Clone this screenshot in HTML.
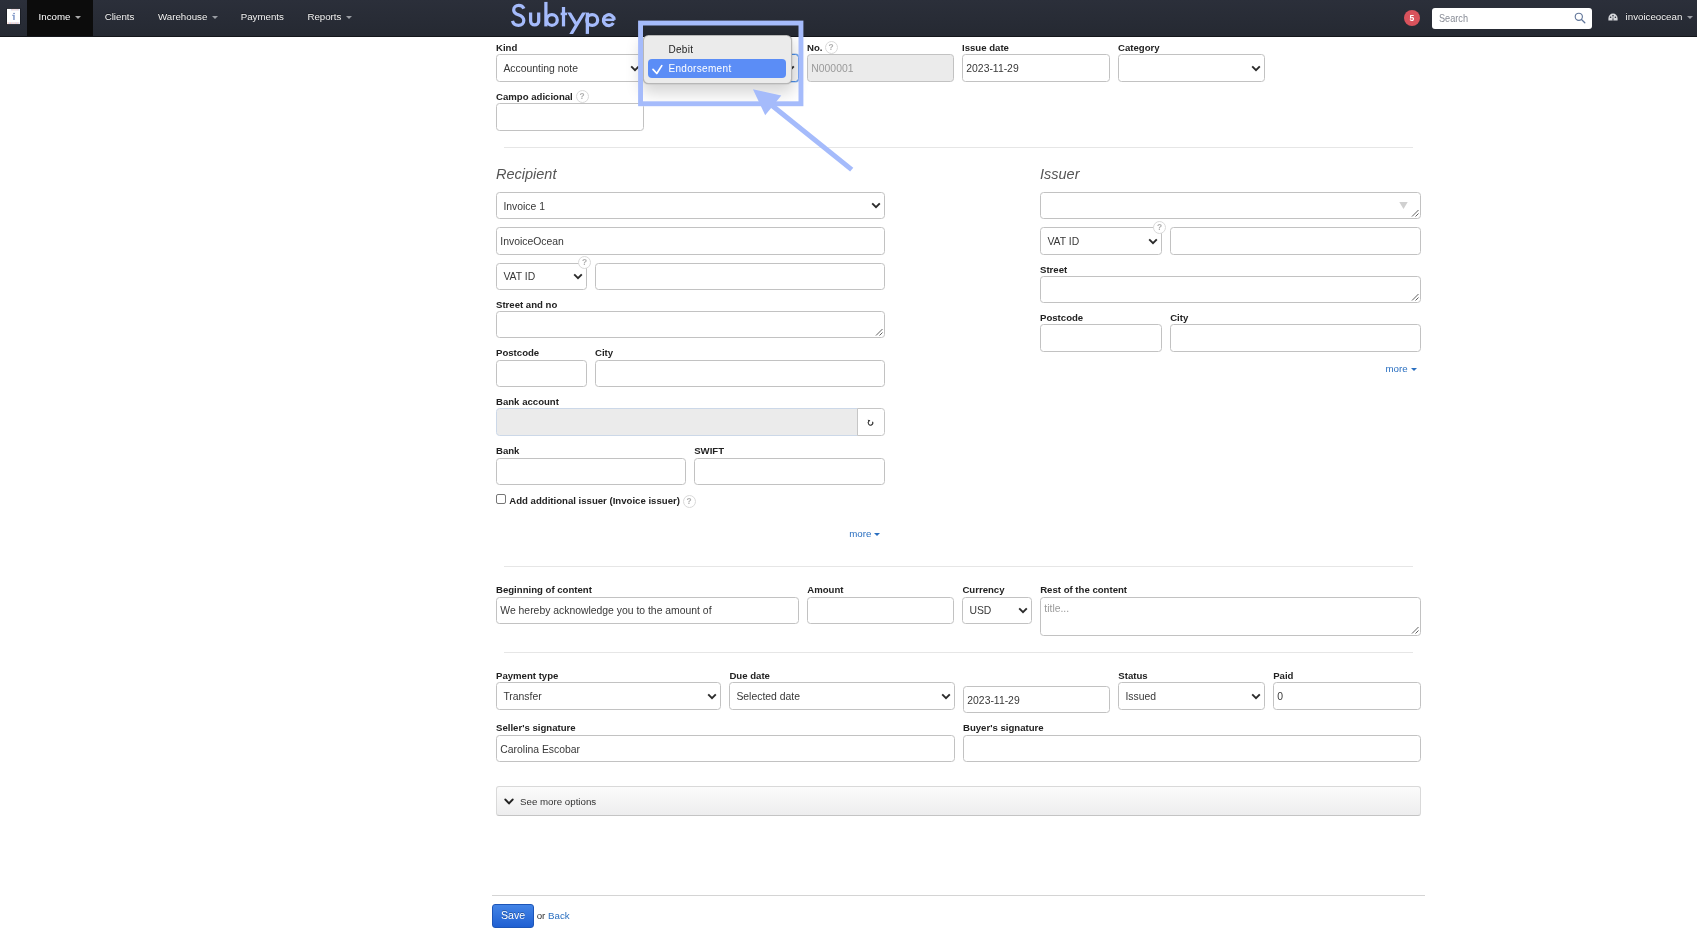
<!DOCTYPE html>
<html>
<head>
<meta charset="utf-8">
<title>New accounting note</title>
<style>
html,body{margin:0;padding:0}
body{width:1697px;height:944px;overflow:hidden;background:#fff;position:relative;font-family:"Liberation Sans",sans-serif;color:#222}
.a{position:absolute}
#form,#anno,#nav{will-change:transform}
#form,#anno{position:absolute;left:0;top:0;width:1697px;height:944px}
/* navbar */
#nav{position:absolute;left:0;top:0;width:1697px;height:36px;background:linear-gradient(#2b2f3a,#252932);border-bottom:1px solid #14161b;box-sizing:content-box}
#nav .it{position:absolute;top:0;height:36px;line-height:34px;font-size:9.72px;color:#f2f2f2;white-space:nowrap;text-shadow:0 -1px 0 rgba(0,0,0,.5)}
.car{display:inline-block;width:0;height:0;border-left:3px solid transparent;border-right:3px solid transparent;border-top:3px solid #9a9da3;vertical-align:middle;margin-left:5px;margin-top:0}
/* form */
.l{position:absolute;font-weight:bold;font-size:9.6px;color:#222;line-height:12px;white-space:nowrap}
.in{position:absolute;box-sizing:border-box;border:1px solid #c2c2c2;border-radius:3.5px;background:#fff;height:27px;font-size:10.4px;color:#333;line-height:25px;padding-left:3.5px;white-space:nowrap;overflow:hidden}
.t{position:absolute;line-height:13px;white-space:nowrap}
.dis{background:#ebebeb;color:#999}
.hr{position:absolute;height:1px;background:#e6e6e6}
.q{position:absolute;box-sizing:border-box;width:13px;height:13px;border:1px solid #d9d9d9;border-radius:50%;background:#fff;color:#b0b0b0;font-size:8.4px;font-weight:bold;line-height:11px;text-align:center}
.h{position:absolute;font-style:italic;font-size:14.5px;color:#555;line-height:18px;white-space:nowrap}
.lnk{position:absolute;font-size:9.72px;color:#2a6fc0;line-height:12px;white-space:nowrap}
.lnk .car{border-top-color:#2a6fc0;margin-left:3px}
</style>
</head>
<body>

<!-- NAVBAR -->
<div id="nav">
  <div class="a" style="left:27px;top:0;width:66px;height:36px;background:#0c0c0c"></div>
  <svg class="a" style="left:6px;top:8px" width="15" height="17" viewBox="6 8 15 17">
    <rect x="6.4" y="8.3" width="14.2" height="16.3" fill="#171a20"/>
    <rect x="7" y="8.9" width="13" height="15.2" fill="#fff"/>
    <g fill="#c3cfee"><rect x="10.9" y="9.3" width="1.2" height="1.1"/><rect x="13.3" y="9.3" width="1.2" height="1.1"/><rect x="15.7" y="9.3" width="1.2" height="1.1"/><rect x="18.1" y="9.3" width="1.2" height="1.1"/><rect x="8.7" y="22.4" width="1.2" height="1.4"/><rect x="11.1" y="22.4" width="1.2" height="1.4"/><rect x="13.5" y="22.4" width="1.2" height="1.4"/><rect x="15.9" y="22.4" width="1.2" height="1.4"/><rect x="18.3" y="22.4" width="1.2" height="1.4"/></g>
    <g fill="#f3c3ba"><rect x="12.1" y="9.3" width="1.2" height="1.1"/><rect x="14.5" y="9.3" width="1.2" height="1.1"/><rect x="16.9" y="9.3" width="1.2" height="1.1"/><rect x="7.5" y="22.4" width="1.2" height="1.4"/><rect x="9.9" y="22.4" width="1.2" height="1.4"/><rect x="12.3" y="22.4" width="1.2" height="1.4"/><rect x="14.7" y="22.4" width="1.2" height="1.4"/><rect x="17.1" y="22.4" width="1.2" height="1.4"/></g>
    <rect x="13.2" y="12.9" width="1.7" height="1" fill="#6f88bd"/>
    <path d="M12.1 14.7H14.7V19.9H13.2V15.7H12.1Z" fill="#7f97c8"/>
  </svg>
  <div class="it" style="left:38.6px;color:#fff;font-weight:normal">Income<span class="car" style="border-top-color:#aaa"></span></div>
  <div class="it" style="left:104.7px">Clients</div>
  <div class="it" style="left:158px">Warehouse<span class="car"></span></div>
  <div class="it" style="left:240.7px">Payments</div>
  <div class="it" style="left:307.4px">Reports<span class="car"></span></div>
  <!-- right -->
  <div class="a" style="left:1403.5px;top:9.5px;width:16.5px;height:16.5px;border-radius:50%;background:#d8525c;color:#fff;font-size:8.5px;font-weight:bold;line-height:16.5px;text-align:center">5</div>
  <div class="a" style="left:1432px;top:8px;width:160px;height:21px;border-radius:3px;background:#fff;box-sizing:border-box;padding-left:6.8px;font-size:10.4px;line-height:21px;color:#888c96"><span style="display:inline-block;transform:scaleX(.88);transform-origin:0 50%">Search</span></div>
  <svg class="a" style="left:1574px;top:11.5px" width="12" height="12" viewBox="0 0 12 12"><circle cx="4.8" cy="4.8" r="3.6" fill="none" stroke="#5f7498" stroke-width="1.1"/><path d="M7.5 7.5L10.8 10.8" stroke="#5f7498" stroke-width="1.3" stroke-linecap="round"/></svg>
  <svg class="a" style="left:1607.5px;top:12.5px" width="10" height="9" viewBox="0 0 10 9"><path d="M5 0.6A4.6 4.6 0 0 0 0.4 5.2V7.6H9.6V5.2A4.6 4.6 0 0 0 5 0.6Z" fill="#d6d8dc"/><circle cx="2.6" cy="4.3" r="0.8" fill="#272b35"/><circle cx="5" cy="2.7" r="0.8" fill="#272b35"/><circle cx="7.4" cy="4.3" r="0.8" fill="#272b35"/><path d="M4.4 7.6L5 3.6L5.6 7.6Z" fill="#272b35"/></svg>
  <div class="it" style="left:1625.6px">invoiceocean<span class="car"></span></div>
</div>

<!-- FORM -->
<div id="form">
<div class="l" style="left:496px;top:41.5px">Kind</div>
<div class="in " style="left:496px;top:54px;width:148px;height:28px;"></div><div class="a" style="left:630.0px;top:64.9px;line-height:0"><svg width="10" height="8" viewBox="0 0 10 8"><path d="M1.2 1.3L5 5.1L8.8 1.3" fill="none" stroke="#2b2b2b" stroke-width="1.9" stroke-linecap="butt" stroke-linejoin="miter"/></svg></div><div class="t" style="left:503.4px;top:62px;color:#383838;font-size:10.4px">Accounting note</div>
<div class="in" style="left:651px;top:54px;width:148px;height:28px;border:1px solid #4a8de6;box-shadow:0 0 0 .5px #9cc0f3;background:#f6f6f6"></div><div class="a" style="left:785px;top:65.3px;line-height:0"><svg width="10" height="8" viewBox="0 0 10 8"><path d="M1.2 1.3L5 5.1L8.8 1.3" fill="none" stroke="#2b2b2b" stroke-width="1.9" stroke-linecap="butt" stroke-linejoin="miter"/></svg></div>
<div class="l" style="left:807px;top:41.5px">No.</div>
<div class="q" style="left:824.5px;top:41.0px">?</div>
<div class="in dis" style="left:807px;top:54px;width:147px;height:28px;"></div><div class="t" style="left:811.3px;top:62px;color:#9a9a9a;font-size:10.4px">N000001</div>
<div class="l" style="left:962px;top:41.5px">Issue date</div>
<div class="in " style="left:962px;top:54px;width:148px;height:28px;"></div><div class="t" style="left:966.3px;top:62px;color:#383838;font-size:10.4px">2023-11-29</div>
<div class="l" style="left:1118px;top:41.5px">Category</div>
<div class="in " style="left:1118px;top:54px;width:147px;height:28px;"></div><div class="a" style="left:1251.0px;top:64.9px;line-height:0"><svg width="10" height="8" viewBox="0 0 10 8"><path d="M1.2 1.3L5 5.1L8.8 1.3" fill="none" stroke="#2b2b2b" stroke-width="1.9" stroke-linecap="butt" stroke-linejoin="miter"/></svg></div>
<div class="l" style="left:496px;top:90.7px">Campo adicional</div>
<div class="q" style="left:575.5px;top:90.4px">?</div>
<div class="in " style="left:496px;top:103px;width:148px;height:28px;"></div>
<div class="hr" style="left:504px;top:147px;width:909px"></div>
<div class="h" style="left:496px;top:165px">Recipient</div>
<div class="in " style="left:496px;top:192px;width:389px;height:27px;"></div><div class="a" style="left:871.0px;top:202.4px;line-height:0"><svg width="10" height="8" viewBox="0 0 10 8"><path d="M1.2 1.3L5 5.1L8.8 1.3" fill="none" stroke="#2b2b2b" stroke-width="1.9" stroke-linecap="butt" stroke-linejoin="miter"/></svg></div><div class="t" style="left:503.4px;top:200px;color:#383838;font-size:10.4px">Invoice 1</div>
<div class="in " style="left:496px;top:227px;width:389px;height:28px;"></div><div class="t" style="left:500.3px;top:235px;color:#383838;font-size:10.4px">InvoiceOcean</div>
<div class="in " style="left:496px;top:263px;width:91px;height:27px;"></div><div class="a" style="left:573.0px;top:273.4px;line-height:0"><svg width="10" height="8" viewBox="0 0 10 8"><path d="M1.2 1.3L5 5.1L8.8 1.3" fill="none" stroke="#2b2b2b" stroke-width="1.9" stroke-linecap="butt" stroke-linejoin="miter"/></svg></div><div class="t" style="left:503.4px;top:270px;color:#383838;font-size:10.4px">VAT ID</div>
<div class="in " style="left:595px;top:263px;width:290px;height:27px;"></div>
<div class="q" style="left:578.1px;top:256.0px">?</div>
<div class="l" style="left:496px;top:298.5px">Street and no</div>
<div class="in " style="left:496px;top:311px;width:389px;height:27px;"></div><div class="a" style="left:874.7px;top:327.7px;line-height:0"><svg width="8" height="8" viewBox="0 0 8 8"><path d="M7.5 1L1 7.5M7.5 4.5L4.5 7.5" stroke="#444" stroke-width="0.85" fill="none"/></svg></div>
<div class="l" style="left:496px;top:346.7px">Postcode</div>
<div class="l" style="left:595px;top:346.7px">City</div>
<div class="in " style="left:496px;top:360px;width:91px;height:27px;"></div>
<div class="in " style="left:595px;top:360px;width:290px;height:27px;"></div>
<div class="l" style="left:496px;top:395.6px">Bank account</div>
<div class="in dis" style="left:496px;top:408px;width:362px;height:28px;border-color:#ccd8e8;border-radius:3.5px 0 0 3.5px"></div>
<div class="in" style="left:857px;top:408px;width:28px;height:28px;border-color:#c6c6c6;border-radius:0 3.5px 3.5px 0"></div><svg class="a" style="left:866.4px;top:418.3px" width="9" height="9.6" viewBox="0 0 9 9.6"><path d="M6.49 3.65A2.3 2.3 0 1 1 2.96 3.09" stroke="#2e2e2e" stroke-width="1.05" fill="none"/><path d="M1.7 1.8L4.4 2.3L2.8 3.9Z" fill="#2e2e2e"/></svg>
<div class="l" style="left:496px;top:444.6px">Bank</div>
<div class="l" style="left:694.2px;top:444.6px">SWIFT</div>
<div class="in " style="left:496px;top:458px;width:190px;height:27px;"></div>
<div class="in " style="left:694px;top:458px;width:191px;height:27px;"></div>
<div class="a" style="left:496px;top:494px;width:10px;height:10.4px;box-sizing:border-box;border:1px solid #767676;border-radius:2px;background:#fff"></div>
<div class="l" style="left:509.3px;top:494.6px">Add additional issuer (Invoice issuer)</div>
<div class="q" style="left:682.5px;top:494.5px">?</div>
<div class="lnk" style="left:849.2px;top:527.8px">more<span class="car"></span></div>
<div class="h" style="left:1040px;top:165px">Issuer</div>
<div class="in " style="left:1040px;top:192px;width:381px;height:27px;"></div><div class="a" style="left:1410.7px;top:208.7px;line-height:0"><svg width="8" height="8" viewBox="0 0 8 8"><path d="M7.5 1L1 7.5M7.5 4.5L4.5 7.5" stroke="#444" stroke-width="0.85" fill="none"/></svg></div><svg class="a" style="left:1399px;top:202.3px" width="9" height="7" viewBox="0 0 9 7"><path d="M0.3 0L8.7 0L4.5 7Z" fill="#d0d0d0"/></svg>
<div class="in " style="left:1040px;top:227px;width:122px;height:28px;"></div><div class="a" style="left:1148.0px;top:237.9px;line-height:0"><svg width="10" height="8" viewBox="0 0 10 8"><path d="M1.2 1.3L5 5.1L8.8 1.3" fill="none" stroke="#2b2b2b" stroke-width="1.9" stroke-linecap="butt" stroke-linejoin="miter"/></svg></div><div class="t" style="left:1047.4px;top:235px;color:#383838;font-size:10.4px">VAT ID</div>
<div class="in " style="left:1170px;top:227px;width:251px;height:28px;"></div>
<div class="q" style="left:1153.1px;top:221.1px">?</div>
<div class="l" style="left:1040px;top:263.8px">Street</div>
<div class="in " style="left:1040px;top:276px;width:381px;height:27px;"></div><div class="a" style="left:1410.7px;top:292.7px;line-height:0"><svg width="8" height="8" viewBox="0 0 8 8"><path d="M7.5 1L1 7.5M7.5 4.5L4.5 7.5" stroke="#444" stroke-width="0.85" fill="none"/></svg></div>
<div class="l" style="left:1040px;top:311.7px">Postcode</div>
<div class="l" style="left:1170.2px;top:311.7px">City</div>
<div class="in " style="left:1040px;top:324px;width:122px;height:28px;"></div>
<div class="in " style="left:1170px;top:324px;width:251px;height:28px;"></div>
<div class="lnk" style="left:1385.5px;top:362.7px">more<span class="car"></span></div>
<div class="hr" style="left:504px;top:566px;width:909px"></div>
<div class="l" style="left:496px;top:583.6px">Beginning of content</div>
<div class="in " style="left:496px;top:597px;width:303px;height:27px;"></div><div class="t" style="left:500.3px;top:604px;color:#383838;font-size:10.4px">We hereby acknowledge you to the amount of</div>
<div class="l" style="left:807.3px;top:583.6px">Amount</div>
<div class="in " style="left:807px;top:597px;width:147px;height:27px;"></div>
<div class="l" style="left:962.4px;top:583.6px">Currency</div>
<div class="in " style="left:962px;top:597px;width:70px;height:27px;"></div><div class="a" style="left:1018.0px;top:607.4px;line-height:0"><svg width="10" height="8" viewBox="0 0 10 8"><path d="M1.2 1.3L5 5.1L8.8 1.3" fill="none" stroke="#2b2b2b" stroke-width="1.9" stroke-linecap="butt" stroke-linejoin="miter"/></svg></div><div class="t" style="left:969.4px;top:604px;color:#383838;font-size:10.4px">USD</div>
<div class="l" style="left:1040.2px;top:583.6px">Rest of the content</div>
<div class="in " style="left:1040px;top:597px;width:381px;height:39px;"></div><div class="a" style="left:1410.7px;top:625.7px;line-height:0"><svg width="8" height="8" viewBox="0 0 8 8"><path d="M7.5 1L1 7.5M7.5 4.5L4.5 7.5" stroke="#444" stroke-width="0.85" fill="none"/></svg></div><div class="t" style="left:1044.3px;top:602px;color:#9a9a9a;font-size:10.4px">title...</div>
<div class="hr" style="left:504px;top:652px;width:909px"></div>
<div class="l" style="left:496px;top:669.5px">Payment type</div>
<div class="in " style="left:496px;top:682px;width:225px;height:28px;"></div><div class="a" style="left:707.0px;top:692.9px;line-height:0"><svg width="10" height="8" viewBox="0 0 10 8"><path d="M1.2 1.3L5 5.1L8.8 1.3" fill="none" stroke="#2b2b2b" stroke-width="1.9" stroke-linecap="butt" stroke-linejoin="miter"/></svg></div><div class="t" style="left:503.4px;top:690px;color:#383838;font-size:10.4px">Transfer</div>
<div class="l" style="left:729.4px;top:669.5px">Due date</div>
<div class="in " style="left:729px;top:682px;width:226px;height:28px;"></div><div class="a" style="left:941.0px;top:692.9px;line-height:0"><svg width="10" height="8" viewBox="0 0 10 8"><path d="M1.2 1.3L5 5.1L8.8 1.3" fill="none" stroke="#2b2b2b" stroke-width="1.9" stroke-linecap="butt" stroke-linejoin="miter"/></svg></div><div class="t" style="left:736.4px;top:690px;color:#383838;font-size:10.4px">Selected date</div>
<div class="in " style="left:963px;top:686px;width:147px;height:27px;"></div><div class="t" style="left:967.3px;top:694px;color:#383838;font-size:10.4px">2023-11-29</div>
<div class="l" style="left:1118.3px;top:669.5px">Status</div>
<div class="in " style="left:1118px;top:682px;width:147px;height:28px;"></div><div class="a" style="left:1251.0px;top:692.9px;line-height:0"><svg width="10" height="8" viewBox="0 0 10 8"><path d="M1.2 1.3L5 5.1L8.8 1.3" fill="none" stroke="#2b2b2b" stroke-width="1.9" stroke-linecap="butt" stroke-linejoin="miter"/></svg></div><div class="t" style="left:1125.4px;top:690px;color:#383838;font-size:10.4px">Issued</div>
<div class="l" style="left:1273.2px;top:669.5px">Paid</div>
<div class="in " style="left:1273px;top:682px;width:148px;height:28px;"></div><div class="t" style="left:1277.3px;top:690px;color:#383838;font-size:10.4px">0</div>
<div class="l" style="left:496px;top:721.5px">Seller's signature</div>
<div class="in " style="left:496px;top:735px;width:459px;height:27px;"></div><div class="t" style="left:500.3px;top:743px;color:#383838;font-size:10.4px">Carolina Escobar</div>
<div class="l" style="left:963px;top:721.5px">Buyer's signature</div>
<div class="in " style="left:963px;top:735px;width:458px;height:27px;"></div>
<div class="a" style="left:496px;top:786px;width:925px;height:30px;box-sizing:border-box;border:1px solid #d9d9d9;border-bottom-color:#c4c4c4;border-radius:3px;background:linear-gradient(#fbfbfb,#ededee)"></div>
<svg class="a" style="left:503.5px;top:798px" width="10" height="8" viewBox="0 0 10 8"><path d="M1.4 1.6L5 5.4L8.6 1.6" fill="none" stroke="#222" stroke-width="2.1" stroke-linecap="round" stroke-linejoin="round"/></svg>
<div class="a" style="left:520px;top:796px;font-size:9.72px;line-height:12px;color:#333;white-space:nowrap">See more options</div>
<div class="hr" style="left:492px;top:895px;width:933px;background:#d4d4d4"></div>
<div class="a" style="left:492px;top:904px;width:42px;height:24px;box-sizing:border-box;border:1px solid #1c55b8;border-radius:3px;background:linear-gradient(#4384e6,#1f5fd2);color:#fff;font-size:10.6px;line-height:21px;text-align:center;text-shadow:0 -1px 0 rgba(0,0,0,.3)">Save</div>
<div class="a" style="left:536.7px;top:909.5px;font-size:9.72px;line-height:12px;color:#333;white-space:nowrap">or <span style="color:#2a6fc0">Back</span></div>
</div>

<!-- ANNOTATION -->
<div id="anno">
  <!-- macOS select popup -->
  <div class="a" style="left:643px;top:35px;width:148.5px;height:48.5px;box-sizing:border-box;border-radius:5.5px;background:#ebebeb;border:0.5px solid rgba(0,0,0,.22);box-shadow:0 7px 16px 2px rgba(0,0,0,.17),0 0 1.5px rgba(0,0,0,.3)"></div>
  <div class="a" style="left:668.4px;top:43px;font-size:10px;letter-spacing:.33px;line-height:13px;color:#222;white-space:nowrap">Debit</div>
  <div class="a" style="left:648px;top:59px;width:138px;height:19px;border-radius:4px;background:#5b8df6"></div>
  <svg class="a" style="left:650px;top:62px" width="14" height="14" viewBox="0 0 14 14"><path d="M3 7.4L6.8 11.5L11.8 3.6" fill="none" stroke="#fff" stroke-width="1.7" stroke-linecap="round" stroke-linejoin="round"/></svg>
  <div class="a" style="left:668.4px;top:62px;font-size:10px;letter-spacing:.33px;line-height:13px;color:#fff;white-space:nowrap">Endorsement</div>
  <!-- title + highlight rectangle + arrow -->
  <svg class="a" style="left:0;top:0" width="1697" height="944" viewBox="0 0 1697 944">
    <g fill="none" stroke="#a5bbfb" stroke-width="3.25">
      <path d="M523.9 8.7C523 6.6 521.2 5.4 518.7 5.4C515.8 5.4 513.7 7.3 513.7 9.9C513.7 12.5 515.6 13.7 518.4 14.8C521.6 16 523.8 17.4 523.8 20.4C523.8 23.4 521.5 25.3 518.4 25.3C515.4 25.3 513.2 23.6 512.5 20.8"/>
      <path d="M530.6 12.6V20.9A4.05 4.05 0 0 0 538.7 20.9V12.6"/>
      <path d="M545.9 1.9V26.4"/><circle cx="551.95" cy="19.95" r="5.3"/>
      <path d="M563.5 7V26.4"/><path d="M560.6 13.9H567.1" stroke-width="2.6"/>
      <g clip-path="url(#yclip)"><path d="M567.4 9.6L576.6 24.8M585.8 9.6L569.5 36.8"/></g>
      <path d="M587.35 12.6V33.9"/><circle cx="592.2" cy="19.95" r="5.45"/>
      <path d="M614.2 19.8A5.4 5.4 0 1 0 613.4 23"/><path d="M603.8 19.8H614.4" stroke-width="2.6"/>
    </g>
    <clipPath id="yclip"><rect x="560" y="12.6" width="40" height="21.3"/></clipPath>
    <rect x="640.55" y="23.05" width="160.4" height="80.7" fill="none" stroke="#a5bbfb" stroke-width="4.9"/>
    <path d="M851.7 169.6L772 105.5" stroke="#a5bbfb" stroke-width="5" fill="none"/>
    <path d="M752.9 89.3L781.3 95.6L765.2 115.2Z" fill="#a5bbfb"/>
  </svg>
</div>

</body>
</html>
